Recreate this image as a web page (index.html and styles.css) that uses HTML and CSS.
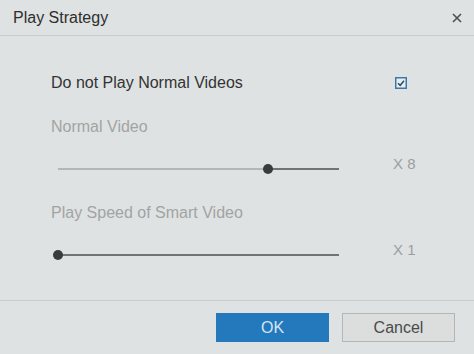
FILE: index.html
```html
<!DOCTYPE html>
<html lang="en">

<head>
    <meta charset="utf-8" />
    <title>Play Strategy</title>
    <link rel="stylesheet" href="styles.css">
</head>

<body>
    <div class="Dialog">
        <div class="Header">
            <div class="Title">Play Strategy</div>
            <div class="Close">
                <svg width="10" height="10" viewBox="0 0 10 10">
                    <path d="M1 1 L9 9 M9 1 L1 9" stroke="#4e5050" stroke-width="1.6" />
                </svg>
            </div>
        </div>
        <div class="Content">
            <div class="Row CheckRow">
                <div class="Label">Do not Play Normal Videos</div>
                <div class="Check">
                    <svg width="12" height="12" viewBox="0 0 12 12">
                        <rect x="0.75" y="0.75" width="10.5" height="10.5" fill="#e6eef5" stroke="#3f77a8" stroke-width="1.5" />
                        <path d="M3 6.2 L5.2 8.3 L9 3.8" fill="none" stroke="#2f4a5e" stroke-width="1.5" />
                    </svg>
                </div>
            </div>
            <div class="Row SubLabel First">Normal Video</div>
            <div class="Row SliderRow">
                <div class="Slider">
                    <div class="Track"></div>
                    <div class="Fill" style="width: 210px"></div>
                    <div class="Thumb" style="left: 210px"></div>
                </div>
                <div class="Value">X 8</div>
            </div>
            <div class="Row SubLabel">Play Speed of Smart Video</div>
            <div class="Row SliderRow">
                <div class="Slider">
                    <div class="Track"></div>
                    <div class="Fill" style="width: 0px"></div>
                    <div class="Thumb" style="left: 0px"></div>
                </div>
                <div class="Value">X 1</div>
            </div>
        </div>
        <div class="Footer">
            <div class="Button Ok">OK</div>
            <div class="Button Cancel">Cancel</div>
        </div>
    </div>
</body>

</html>
```

FILE: styles.css
```css
html,
body {
    margin: 0;
    padding: 0;
}

body {
    background: #dfe2e2;
    font-family: "Liberation Sans", Arial, sans-serif;
}

.Dialog {
    width: 474px;
    height: 354px;
    display: flex;
    flex-direction: column;
}

.Header {
    height: 36px;
    border-bottom: 1px solid #c9cccc;
    display: flex;
    align-items: center;
    justify-content: space-between;
    padding: 0 12px 0 13px;
    box-sizing: border-box;
}

.Title {
    font-size: 16px;
    color: #2e2e2e;
}

.Close svg {
    display: block;
}

.Content {
    flex: 1;
    padding: 37px 0 0 51px;
    box-sizing: border-box;
    border-bottom: 1px solid #c9cccc;
}

.Row {
    display: grid;
    grid-template-columns: 342px auto;
}

.CheckRow {
    height: 20px;
    align-items: center;
}

.Label {
    font-size: 16px;
    color: #333333;
}

.Check {
    margin-left: 2px;
    height: 12px;
}

.Check svg {
    display: block;
}

.SubLabel {
    display: block;
    margin-top: 22px;
    height: 20px;
    line-height: 20px;
    font-size: 16px;
    color: #a2a4a4;
}

.SubLabel.First {
    margin-top: 24px;
}

.SliderRow {
    margin-top: 20px;
    height: 24px;
}

.Slider {
    position: relative;
    margin-left: 7px;
    width: 281px;
    height: 24px;
}

.Track {
    position: absolute;
    left: 0;
    right: 0;
    top: 11px;
    height: 2px;
    background: #727474;
}

.Fill {
    position: absolute;
    left: 0;
    top: 11px;
    height: 2px;
    background: #b5b7b7;
}

.Thumb {
    position: absolute;
    top: 7px;
    width: 10px;
    height: 10px;
    margin-left: -5px;
    border-radius: 50%;
    background: #3a3b3b;
}

.Value {
    font-size: 15px;
    line-height: 14px;
    color: #9c9e9e;
}

.Footer {
    height: 53px;
    display: flex;
    justify-content: flex-end;
    align-items: flex-start;
    gap: 13px;
    padding: 12px 19px 0 0;
    box-sizing: border-box;
}

.Button {
    width: 113px;
    height: 29px;
    box-sizing: border-box;
    display: flex;
    align-items: center;
    justify-content: center;
    font-size: 16px;
}

.Ok {
    background: #2479bd;
    color: #d3e5f4;
}

.Cancel {
    background: #dcdddd;
    border: 1px solid #b4b6b6;
    color: #4a4a4a;
}
```
